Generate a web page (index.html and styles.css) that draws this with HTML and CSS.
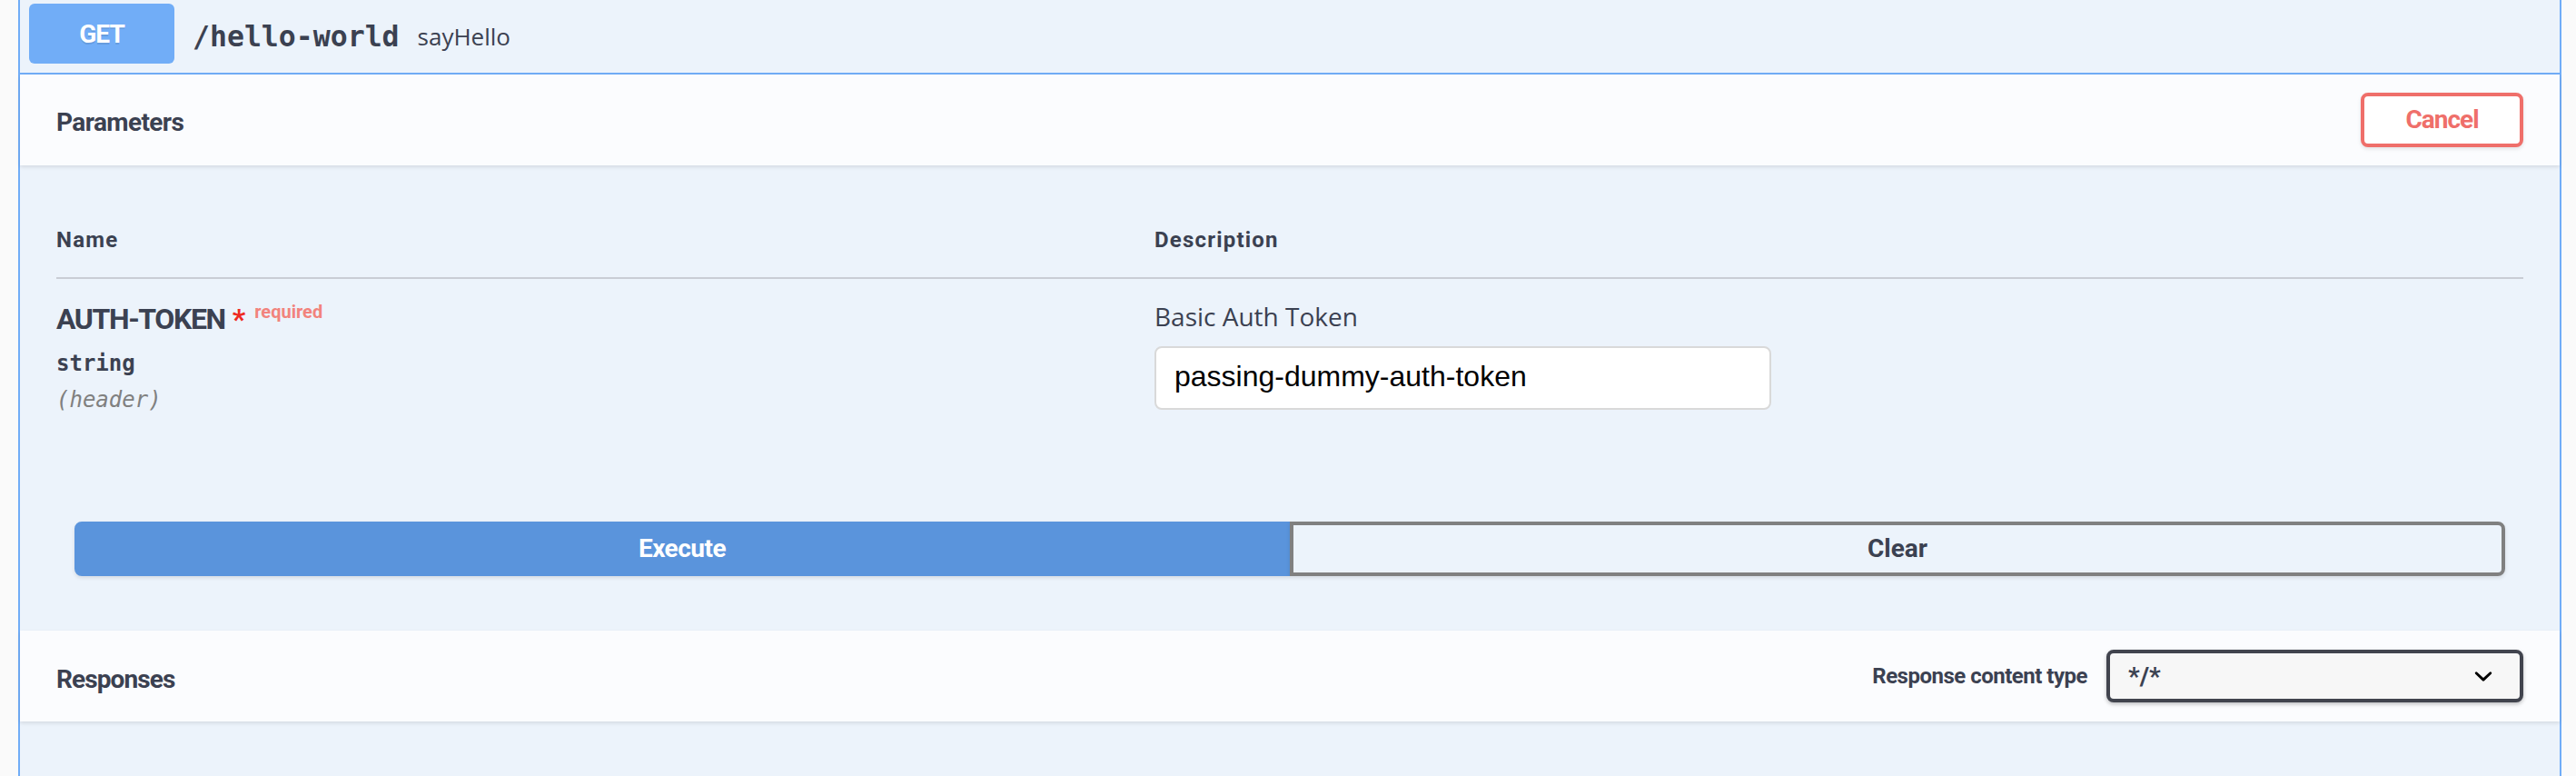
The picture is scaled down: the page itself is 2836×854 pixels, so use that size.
FILE: index.html
```html
<!DOCTYPE html>
<html lang="en">
<head>
<meta charset="utf-8">
<title>hello-world</title>
<link rel="stylesheet" href="styles.css">
</head>
<body>
<div class="opblock">
  <div class="summary">
    <span class="method">GET</span>
    <span class="path">/hello-world</span>
    <span class="summary-desc">sayHello</span>
  </div>

  <div class="section-header">
    <h4 class="section-title params-title">Parameters</h4>
    <button class="btn cancel" type="button">Cancel</button>
  </div>

  <div class="table-container">
    <div class="params">
      <div class="th">Name</div>
      <div class="th">Description</div>
      <div class="td">
        <div class="param-name"><span class="name-text">AUTH-TOKEN</span><span class="star">&nbsp;*</span><span class="required">required</span></div>
        <div class="param-type">string</div>
        <div class="param-in">(header)</div>
      </div>
      <div class="td">
        <p class="markdown">Basic Auth Token</p>
        <input class="param-input" type="text" value="passing-dummy-auth-token">
      </div>
    </div>
  </div>

  <div class="btn-group">
    <button class="btn execute" type="button">Execute</button>
    <button class="btn clear" type="button">Clear</button>
  </div>

  <div class="section-header">
    <h4 class="section-title responses-title">Responses</h4>
    <span class="media-label">Response content type</span>
    <div class="select">
      <span>*/*</span>
      <svg class="chevron" viewBox="0 0 20 20" width="40" height="40" aria-hidden="true"><path d="M13.418 7.859a.695.695 0 01.978 0 .68.68 0 010 .969l-3.908 3.83a.697.697 0 01-.979 0l-3.908-3.83a.68.68 0 010-.969.695.695 0 01.978 0L10 11l3.418-3.141z"/></svg>
    </div>
  </div>
</div>
</body>
</html>
```

FILE: styles.css
```css
html, body {
  margin: 0;
  padding: 0;
}

body {
  background: #fafafa;
  height: 854px;
  overflow: hidden;
}

.opblock {
  margin: 0 16px 0 20px;
  height: 854px;
  box-sizing: border-box;
  border-left: 2px solid #71adf7;
  border-right: 2px solid #71adf7;
  background: #ecf3fb;
}

/* summary bar */
.summary {
  display: flex;
  align-items: center;
  padding: 4px 10px 10px;
  border-bottom: 2px solid #71adf7;
}

.method {
  width: 160px;
  height: 66px;
  display: flex;
  align-items: center;
  justify-content: center;
  background: #71adf7;
  border-radius: 6px;
  color: #fff;
  font-family: Roboto, sans-serif;
  font-weight: 700;
  font-size: 28px;
  letter-spacing: -1px;
  text-shadow: 0 2px 0 rgba(0, 0, 0, .1);
}

.path {
  padding: 5px 20px 0;
  font-family: "DejaVu Sans Mono", monospace;
  font-weight: 700;
  font-size: 31.5px;
  color: #3b4151;
}

.summary-desc {
  padding-top: 5px;
  font-family: "Open Sans", sans-serif;
  font-size: 26px;
  color: #3b4151;
}

/* section headers */
.section-header {
  display: flex;
  align-items: center;
  min-height: 100px;
  box-sizing: border-box;
  padding: 16px 40px;
  background: #fbfcfe;
  box-shadow: 0 2px 4px rgba(0, 0, 0, .1);
}

.section-title {
  flex: 1;
  margin: 0;
  padding-top: 4px;
  font-family: Roboto, sans-serif;
  font-weight: 700;
  font-size: 28px;
  color: #3b4151;
}

.params-title {
  letter-spacing: -0.6px;
}

.responses-title {
  padding-top: 6px;
  letter-spacing: -0.9px;
}

/* buttons */
.btn {
  font-family: Roboto, sans-serif;
  font-weight: 700;
  font-size: 28px;
  line-height: 32px;
  padding: 10px 46px;
  border: 4px solid #808080;
  border-radius: 8px;
  background: transparent;
  color: #3b4151;
  box-shadow: 0 2px 4px rgba(0, 0, 0, .1);
}

.cancel {
  width: 179px;
  height: 60px;
  padding: 0;
  box-sizing: border-box;
  border-color: #ef6f6a;
  color: #ef6f6a;
  background: #fff;
  letter-spacing: -1px;
}

/* parameters table */
.table-container {
  padding: 40px 40px 33px;
}

.params {
  display: grid;
  grid-template-columns: 1209px 1fr;
}

.th {
  padding: 24px 0 23px;
  border-bottom: 2px solid #c9cdd5;
  font-family: Roboto, sans-serif;
  font-weight: 700;
  font-size: 24px;
  line-height: 36px;
  letter-spacing: 1.2px;
  color: #3b4151;
}

.td {
  padding: 20px 0;
}

.param-name {
  font-family: Roboto, sans-serif;
  font-weight: 700;
  font-size: 32px;
  line-height: 48px;
  color: #3b4151;
}

.name-text {
  letter-spacing: -1.4px;
}

.star {
  color: #ee2a22;
}

.required {
  padding: 0 10px;
  font-size: 20px;
  line-height: 20px;
  vertical-align: 12px;
  color: #f2837d;
}

.param-type {
  padding: 10px 0;
  font-family: "DejaVu Sans Mono", monospace;
  font-weight: 700;
  font-size: 24px;
  line-height: 30px;
  color: #3b4151;
}

.param-in {
  font-family: "DejaVu Sans Mono", monospace;
  font-style: italic;
  font-size: 24px;
  line-height: 30px;
  color: #808080;
}

.markdown {
  margin: 0;
  font-family: "Open Sans", sans-serif;
  font-size: 28px;
  line-height: 42px;
  color: #3b4151;
}

.param-input {
  display: block;
  width: 679px;
  height: 70px;
  box-sizing: border-box;
  margin: 12px 0 10px;
  padding: 14px 20px 18px;
  border: 2px solid #d9d9d9;
  border-radius: 8px;
  background: #fff;
  font-family: "Liberation Sans", Arial, sans-serif;
  font-size: 32px;
  color: #000;
  outline: none;
}

/* execute / clear */
.btn-group {
  display: flex;
  padding: 60px;
}

.btn-group .btn {
  flex: 1;
}

.execute {
  background: #5a94dc;
  border-color: #5a94dc;
  color: #fff;
  border-radius: 8px 0 0 8px;
  letter-spacing: -0.5px;
}

.clear {
  border-radius: 0 8px 8px 0;
}

/* responses */
.media-label {
  margin-right: 21px;
  font-family: Roboto, sans-serif;
  font-weight: 700;
  font-size: 24px;
  letter-spacing: -0.5px;
  color: #3b4151;
}

.select {
  width: 459px;
  height: 58px;
  box-sizing: border-box;
  display: flex;
  align-items: center;
  justify-content: space-between;
  padding: 0 20px;
  border: 4px solid #41444e;
  border-radius: 8px;
  background: #f7f7f7;
  box-shadow: 0 2px 4px rgba(0, 0, 0, .25);
  font-family: Roboto, sans-serif;
  font-weight: 700;
  font-size: 28px;
  color: #3b4151;
}

.chevron {
  display: block;
  fill: #000;
}
```
